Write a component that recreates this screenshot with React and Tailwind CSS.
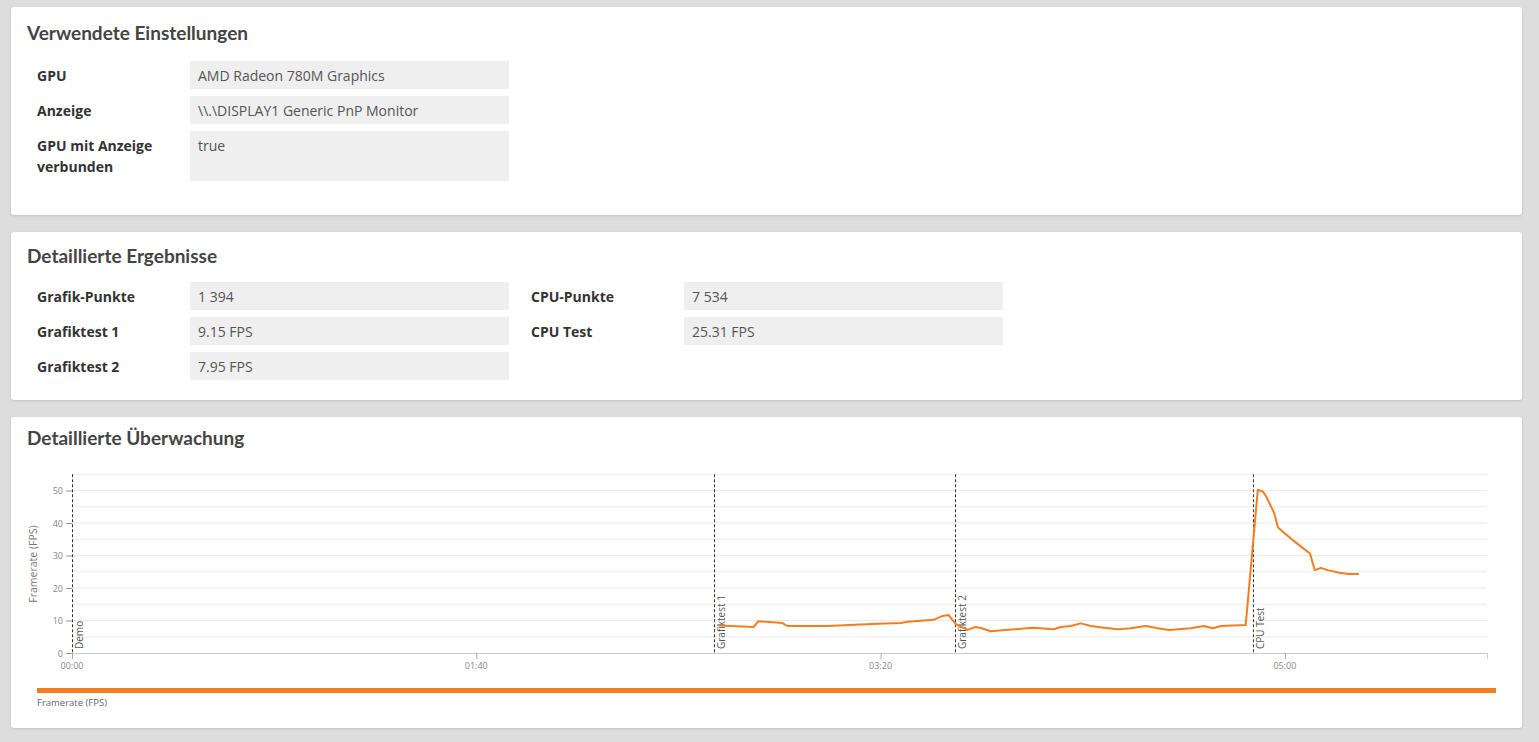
import React from 'react';

const heading = { fontFamily: 'Lato, "Open Sans", sans-serif' };
const body = { fontFamily: '"Open Sans", "Liberation Sans", sans-serif' };

// framerate samples: [seconds, fps]
const samples = [
    [159.9, 8.5], [168.6, 8.0], [169.8, 9.8], [175.7, 9.2], [177.0, 8.3], [186.9, 8.3],
    [199.3, 9.0], [205.0, 9.2], [206.7, 9.6], [213.1, 10.2], [215.3, 11.4], [216.8, 11.7],
    [218.6, 8.9], [221.5, 7.1], [223.5, 8.0], [224.8, 7.7], [227.2, 6.7], [235.4, 7.5],
    [237.9, 7.8], [242.8, 7.3], [244.6, 8.0], [247.0, 8.3], [249.5, 9.1], [252.0, 8.3],
    [255.2, 7.8], [258.7, 7.3], [261.9, 7.6], [265.6, 8.3], [268.6, 7.6], [271.3, 7.1],
    [276.7, 7.6], [280.0, 8.3], [282.2, 7.6], [284.2, 8.3], [290.3, 8.6], [293.3, 50.2],
    [294.6, 49.6], [295.3, 48.3], [297.3, 43.2], [298.3, 38.6], [299.5, 37.3], [302.2, 34.5],
    [303.5, 33.2], [306.2, 30.6], [307.4, 25.5], [308.9, 26.2], [310.6, 25.5], [313.4, 24.7],
    [315.8, 24.3], [318.3, 24.3],
];

const markers = [
    { t: 0, label: 'Demo' },
    { t: 158.8, label: 'Grafiktest 1' },
    { t: 218.4, label: 'Grafiktest 2' },
    { t: 292.1, label: 'CPU Test' },
];

const X0 = 45;
const Y0 = 192;
const sx = t => X0 + t * 4.043;
const sy = v => Y0 - v * 3.25;

function Card({ children, className }) {
    return (
        <div className={`bg-white rounded-[3px] shadow-[0_1px_3px_rgba(0,0,0,0.12)] px-4 ${className}`}>
            {children}
        </div>
    );
}

function Title({ children }) {
    return (
        <h2 style={heading} className="text-[19px] leading-[24px] font-bold text-[#444]">
            {children}
        </h2>
    );
}

function Row({ label, value, tall }) {
    return (
        <div className="flex">
            <div className="w-[153px] pt-[4px] text-[14px] leading-[21px] font-bold text-[#333]">
                {label}
            </div>
            <div className={`w-[319px] bg-[#efefef] px-2 pt-[4px] text-[14px] leading-[21px] text-[#555] ${tall ? 'h-[50px]' : 'h-[28px]'}`}>
                {value}
            </div>
        </div>
    );
}

function Chart() {
    const grid = [5, 10, 15, 20, 25, 30, 35, 40, 45, 50, 55];
    const path = samples.map(([t, v], i) => `${i ? 'L' : 'M'}${sx(t).toFixed(1)},${sy(v).toFixed(1)}`).join(' ');

    return (
        <svg width="1480" height="215" className="block mt-[11px]" style={body}>
            {grid.map(v => (
                <line key={v} x1={X0} x2={1460} y1={sy(v)} y2={sy(v)} stroke="#ebebeb" />
            ))}

            {[0, 10, 20, 30, 40, 50].map(v => (
                <g key={v}>
                    <line x1={39} x2={X0} y1={sy(v) + 0.5} y2={sy(v) + 0.5} stroke="#999" />
                    <text x={36} y={sy(v) + 3.5} textAnchor="end" fontSize="9" fill="#888">{v}</text>
                </g>
            ))}

            <line x1={X0} x2={1460} y1={Y0 + 0.5} y2={Y0 + 0.5} stroke="#ccc" />
            <line x1={1460.5} x2={1460.5} y1={Y0} y2={Y0 + 6} stroke="#ccc" />
            {[['00:00', 0], ['01:40', 100], ['03:20', 200], ['05:00', 300]].map(([lbl, t]) => (
                <g key={lbl}>
                    <line x1={sx(t) + 0.5} x2={sx(t) + 0.5} y1={Y0} y2={Y0 + 6} stroke="#aaa" />
                    <text x={sx(t)} y={208} textAnchor="middle" fontSize="9" fill="#888">{lbl}</text>
                </g>
            ))}

            <text transform="translate(10,103) rotate(-90)" textAnchor="middle" fontSize="10.5" fill="#777">
                Framerate (FPS)
            </text>

            {markers.map(m => (
                <g key={m.label}>
                    <line x1={sx(m.t) + 0.5} x2={sx(m.t) + 0.5} y1={sy(55)} y2={Y0} stroke="#333" strokeDasharray="3 2" />
                    <text transform={`translate(${sx(m.t) + 11},${Y0 - 4}) rotate(-90)`} fontSize="10" fill="#555">
                        {m.label}
                    </text>
                </g>
            ))}

            <path d={path} fill="none" stroke="#f47d20" strokeWidth="2" strokeLinejoin="round" />
        </svg>
    );
}

export default function App() {
    return (
        <div style={body} className="min-h-screen bg-[#dddddd] pt-[7px] pl-[11px] pr-[17px] pb-[15px] flex flex-col gap-[17px]">
            {/* Settings */}
            <Card className="pt-[14px] pb-[34px]">
                <Title>Verwendete Einstellungen</Title>
                <div className="ml-[10px] mt-[16px] flex flex-col gap-[7px]">
                    <Row label="GPU" value="AMD Radeon 780M Graphics" />
                    <Row label="Anzeige" value="\\.\DISPLAY1 Generic PnP Monitor" />
                    <Row label={<>GPU mit Anzeige<br />verbunden</>} value="true" tall />
                </div>
            </Card>

            {/* Results */}
            <Card className="pt-[12px] pb-[20px]">
                <Title>Detaillierte Ergebnisse</Title>
                <div className="ml-[10px] mt-[14px] flex gap-[22px]">
                    <div className="flex flex-col gap-[7px]">
                        <Row label="Grafik-Punkte" value="1 394" />
                        <Row label="Grafiktest 1" value="9.15 FPS" />
                        <Row label="Grafiktest 2" value="7.95 FPS" />
                    </div>
                    <div className="flex flex-col gap-[7px]">
                        <Row label="CPU-Punkte" value="7 534" />
                        <Row label="CPU Test" value="25.31 FPS" />
                    </div>
                </div>
            </Card>

            {/* Monitoring */}
            <Card className="pt-[9px] pb-[18px]">
                <Title>Detaillierte Überwachung</Title>
                <Chart />
                <div className="mx-[10px] mt-[12px] h-[5px] bg-[#f47d20]" />
                <div className="ml-[10px] mt-[3px] text-[9.5px] leading-[14px] text-[#666]">
                    Framerate (FPS)
                </div>
            </Card>
        </div>
    );
}
